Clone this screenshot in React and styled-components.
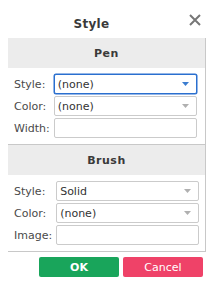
import React from "react";
import styled, { createGlobalStyle } from "styled-components";

const Global = createGlobalStyle`
  html, body { margin: 0; padding: 0; background: #fff; }
  body { font-family: "DejaVu Sans", Verdana, sans-serif; font-size: 11px; color: #444; }
`;

const Dialog = styled.div`
  width: 214px;
  height: 290px;
  box-sizing: border-box;
  padding: 0 8px;
  display: flex;
  flex-direction: column;
`;

const Header = styled.div`
  height: 38px;
  display: flex;
  align-items: flex-start;
`;

const Title = styled.div`
  flex: 1;
  padding-top: 16px;
  text-align: center;
  font-weight: bold;
  font-size: 12px;
  line-height: 16px;
  letter-spacing: 0.3px;
  color: #3a3a3a;
`;

const Close = styled.button`
  width: 31px;
  height: 38px;
  padding: 14px 0 0 14px;
  margin: 0;
  border: 0;
  background: none;
  display: flex;
  align-items: flex-start;
  box-sizing: border-box;
`;

const Panel = styled.div`
  border-right: 1px solid #c8c8c8;
  border-bottom: 1px solid #c8c8c8;
`;

const Section = styled.div`
  & + & { border-top: 1px solid #c8c8c8; }
`;

const SectionHead = styled.div`
  height: 30px;
  background: #ececec;
  display: flex;
  align-items: center;
  justify-content: center;
  font-weight: bold;
  font-size: 11px;
  letter-spacing: 0.5px;
  color: #3a3a3a;
`;

const Rows = styled.div`
  display: grid;
  grid-template-columns: auto 143px;
  column-gap: 4px;
  row-gap: 2px;
  padding: 6px 0 6px 6px;
  align-items: center;
  justify-content: start;
`;

const Label = styled.div`
  color: #4a4a4a;
  font-size: 11px;
`;

const Field = styled.div`
  height: 20px;
  box-sizing: border-box;
  border: 1px solid ${(p) => (p.$focused ? "#2a6fcf" : "#cbcbcb")};
  border-radius: 2px;
  background: #fff;
  display: flex;
  align-items: center;
  padding: 0 7px 0 3px;
  color: #333;
  font-size: 11px;
  ${(p) => p.$focused && "box-shadow: 0 0 0 0.5px #2a6fcf;"}
`;

const FieldText = styled.span`
  flex: 1;
`;

const Arrow = ({ color }) => (
  <svg width="7" height="4" viewBox="0 0 7 4">
    <path d="M0 0H7L3.5 4Z" fill={color} />
  </svg>
);

const Select = ({ value, focused }) => (
  <Field $focused={focused}>
    <FieldText>{value}</FieldText>
    <Arrow color={focused ? "#3b7dd0" : "#b0b0b0"} />
  </Field>
);

const Buttons = styled.div`
  display: flex;
  justify-content: flex-end;
  gap: 4px;
  padding-top: 5px;
  padding-right: 3px;
`;

const Btn = styled.button`
  width: 80px;
  height: 20px;
  border: 0;
  border-radius: 2px;
  background: ${(p) => (p.$variant === "ok" ? "#19a55b" : "#ef4268")};
  color: #fff;
  font-family: "DejaVu Sans", Verdana, sans-serif;
  font-size: 11px;
  padding: 0;
  ${(p) => p.$variant === "ok" && "font-weight: bold;"}
`;

export default function App() {
  return (
    <>
      <Global />
      <Dialog>
        <Header>
          <Title>Style</Title>
          <Close aria-label="Close">
            <svg width="12" height="12" viewBox="0 0 12 12">
              <path d="M1 1L11 11M11 1L1 11" stroke="#777" strokeWidth="2" />
            </svg>
          </Close>
        </Header>
        <Panel>
          <Section>
            <SectionHead>Pen</SectionHead>
            <Rows>
              <Label>Style:</Label>
              <Select value="(none)" focused />
              <Label>Color:</Label>
              <Select value="(none)" />
              <Label>Width:</Label>
              <Field />
            </Rows>
          </Section>
          <Section>
            <SectionHead>Brush</SectionHead>
            <Rows>
              <Label>Style:</Label>
              <Select value="Solid" />
              <Label>Color:</Label>
              <Select value="(none)" />
              <Label>Image:</Label>
              <Field />
            </Rows>
          </Section>
        </Panel>
        <Buttons>
          <Btn $variant="ok">OK</Btn>
          <Btn $variant="cancel">Cancel</Btn>
        </Buttons>
      </Dialog>
    </>
  );
}
